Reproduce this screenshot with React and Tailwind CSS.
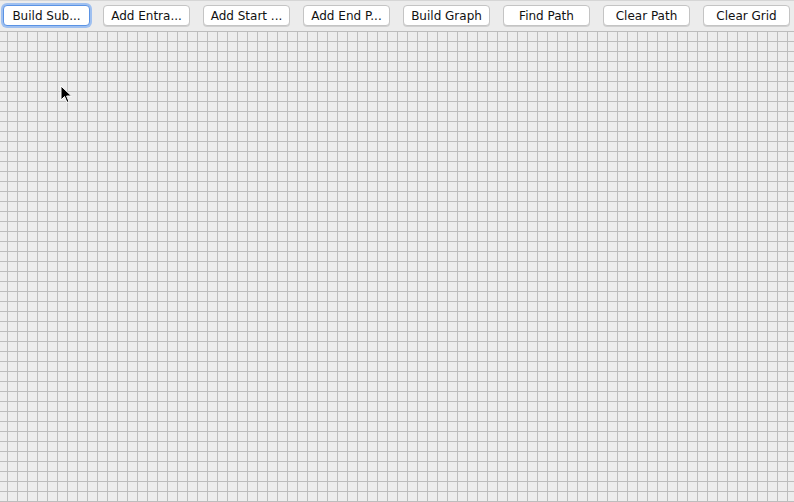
import React from "react";

const labels = [
  "Build Sub...",
  "Add Entra...",
  "Add Start ...",
  "Add End P...",
  "Build Graph",
  "Find Path",
  "Clear Path",
  "Clear Grid",
];

export default function App() {
  return (
    <div className="relative w-[794px] h-[502px] overflow-hidden bg-[#ececec] flex flex-col" style={{ fontFamily: '"DejaVu Sans", sans-serif' }}>
      <div className="h-[31px] shrink-0 flex items-start pl-[3px] pt-[4px] gap-[13px] border-t border-[#d6d6d6]">
        {labels.map((l, i) => (
          <button
            key={l}
            className={
              "w-[87px] h-[21px] shrink-0 rounded-[4px] bg-white text-[12px] leading-none text-[#111] flex items-center justify-center " +
              (i === 0
                ? "border border-[#5b93e4] shadow-[0_0_0_2px_#9fc0f0]"
                : "border border-[#c4c4c4] shadow-[0_1px_0_#d0d0d0]")
            }
          >
            {l}
          </button>
        ))}
      </div>
      <div className="flex-1 relative">
        <svg width="794" height="471" className="block">
          <defs>
            <pattern id="g" width="10" height="10" patternUnits="userSpaceOnUse" x="7" y="0">
              <rect width="10" height="10" fill="#ededed" />
              <rect x="0" y="0" width="1" height="10" fill="#bdbdbd" />
              <rect x="0" y="0" width="10" height="1" fill="#bdbdbd" />
            </pattern>
          </defs>
          <rect width="794" height="471" fill="url(#g)" />
        </svg>
      </div>
      <svg className="absolute left-[60px] top-[85px]" width="14" height="20" viewBox="0 0 14 20">
        <path d="M1 1 L1 15 L4.5 11.5 L7 17.5 L9 16.6 L6.6 11 L11.5 11 Z" fill="#000" stroke="#fff" strokeWidth="1" strokeLinejoin="round" />
      </svg>
    </div>
  );
}
